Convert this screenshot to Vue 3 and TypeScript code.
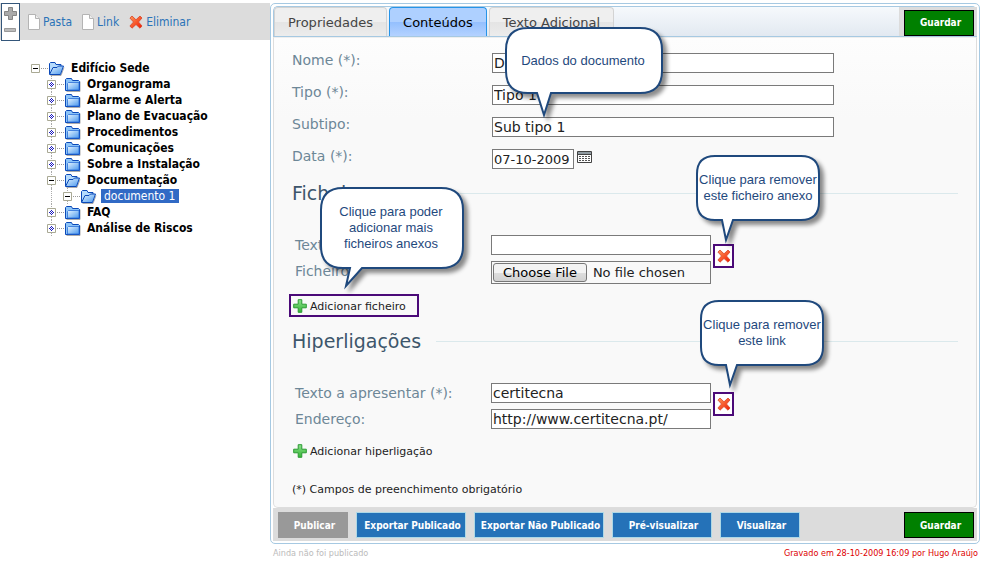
<script setup lang="ts">
import { ref } from 'vue'

interface TreeNode {
  label: string
  level: number
  open: boolean
  selected?: boolean
}

const nodes = ref<TreeNode[]>([
  { label: 'Edifício Sede', level: 0, open: true },
  { label: 'Organograma', level: 1, open: false },
  { label: 'Alarme e Alerta', level: 1, open: false },
  { label: 'Plano de Evacuação', level: 1, open: false },
  { label: 'Procedimentos', level: 1, open: false },
  { label: 'Comunicações', level: 1, open: false },
  { label: 'Sobre a Instalação', level: 1, open: false },
  { label: 'Documentação', level: 1, open: true },
  { label: 'documento 1', level: 2, open: true, selected: true },
  { label: 'FAQ', level: 1, open: false },
  { label: 'Análise de Riscos', level: 1, open: false },
])

const tabs = ['Propriedades', 'Conteúdos', 'Texto Adicional']
const activeTab = ref('Conteúdos')

const actions = [
  { label: 'Exportar Publicado', size: 'large' },
  { label: 'Exportar Não Publicado', size: 'xlarge' },
  { label: 'Pré-visualizar', size: 'medium' },
  { label: 'Visualizar', size: 'small' },
]

const name = ref('Documento 1')
const type = ref('Tipo 1')
const subtype = ref('Sub tipo 1')
const date = ref('07-10-2009')
const fileText = ref('')
const linkText = ref('certitecna')
const linkUrl = ref('http://www.certitecna.pt/')
</script>

<template>
  <svg class="defs" width="0" height="0" aria-hidden="true">
    <defs>
      <linearGradient id="gFolder" x1="0" y1="0" x2="1" y2="1">
        <stop offset="0" stop-color="#e4f4ff" />
        <stop offset="1" stop-color="#4a98ee" />
      </linearGradient>
      <linearGradient id="gRed" x1="0" y1="0" x2="1" y2="1">
        <stop offset="0" stop-color="#ff9a5a" />
        <stop offset="1" stop-color="#f01800" />
      </linearGradient>
      <linearGradient id="gGreen" x1="0" y1="0" x2="0" y2="1">
        <stop offset="0" stop-color="#8be08b" />
        <stop offset="1" stop-color="#35b535" />
      </linearGradient>
      <symbol id="icon-page" viewBox="0 0 12 16">
        <path d="M.5 .5h7l4 4v11H.5z" fill="#fff" stroke="#b4b4b4" />
        <path d="M7.500 .5v4h4" fill="#eee" stroke="#b4b4b4" />
      </symbol>
      <symbol id="icon-cross" viewBox="0 0 14 14">
        <path d="M3 1l4 3.800L11 1l2 2-3.500 4 3.500 4-2 2.200L7 9.500l-4 3.700L.9 11l3.600-4L.9 3z" fill="url(#gRed)" stroke="#d8442a" stroke-width=".8" stroke-linejoin="round" />
      </symbol>
      <symbol id="icon-plus" viewBox="0 0 14 14">
        <path d="M5.200 .7h3.600v4.500h4.500v3.600H8.800v4.500H5.200V8.800H.7V5.200h4.500z" fill="url(#gGreen)" stroke="#2a9a32" stroke-linejoin="round" />
      </symbol>
      <symbol id="icon-closed" viewBox="0 0 17 15">
        <path d="M2.500 14.500h13.500V4.500" fill="none" stroke="#777" stroke-opacity=".6" />
        <path d="M1.500 13.500V2.500l1-1h5l1 2h6l1 1v9z" fill="#8cc4f8" stroke="#0b49b8" />
        <path d="M3.500 13V6.500l1-1h10.500V13z" fill="url(#gFolder)" stroke="#2b6fd8" stroke-width=".8" />
      </symbol>
      <symbol id="icon-open" viewBox="0 0 17 15">
        <path d="M2.500 14.500h10.500l3-8" fill="none" stroke="#777" stroke-opacity=".6" />
        <path d="M1.500 13V2.500l1-1h4.500l1 2h5v2" fill="#b5dbfc" stroke="#0b49b8" />
        <path d="M1.500 13.500L5 6.500h4l1.500-1.500h5L12.500 13.500z" fill="url(#gFolder)" stroke="#0b49b8" stroke-linejoin="round" />
      </symbol>
    </defs>
  </svg>

  <div class="page">
    <aside class="sidebar">
      <div class="toolbar">
        <div class="zoom">
          <button type="button" aria-label="Expandir">
            <svg width="13" height="13" viewBox="0 0 13 13"><path d="M4.500 .5h4v4h4v4h-4v4h-4v-4h-4v-4h4z" fill="#aaa" stroke="#858585" /></svg>
          </button>
          <button type="button" aria-label="Recolher">
            <svg width="13" height="5" viewBox="0 0 13 5"><path d="M.5 .5h11v3H.5z" fill="#bbb" stroke="#999" /></svg>
          </button>
        </div>
        <button type="button" class="tool"><svg width="12" height="16"><use href="#icon-page" /></svg>Pasta</button>
        <button type="button" class="tool"><svg width="12" height="16"><use href="#icon-page" /></svg>Link</button>
        <button type="button" class="tool"><svg width="14" height="14"><use href="#icon-cross" /></svg>Eliminar</button>
      </div>

      <ul class="tree">
        <li v-for="node in nodes" :key="node.label" :class="['node', 'level-' + node.level]">
          <span v-if="node.level === 2" class="guide"></span>
          <svg class="toggle" width="17" height="16" viewBox="0 0 17 16">
            <path v-if="node.level > 0" d="M4.500 0v3M4.500 13v3" stroke="#aaa" stroke-dasharray="1 1" />
            <path d="M10 8.500h7" stroke="#999" stroke-dasharray="1 1" />
            <path d="M.5 4.500h8v8h-8z" fill="#fff" stroke="#a9a994" />
            <path v-if="node.open" d="M2 8.500h5" stroke="#000" />
            <path v-else d="M4 6h1v1H4zM3 7h1v1H3zM5 7h1v1H5zM2 8h1v1H2zM4 8h1v1H4zM6 8h1v1H6zM3 9h1v1H3zM5 9h1v1H5zM4 10h1v1H4z" fill="#1a1ac0" />
          </svg>
          <svg class="folder" width="17" height="15"><use :href="node.open ? '#icon-open' : '#icon-closed'" /></svg>
          <a href="#" :class="{ selected: node.selected }">{{ node.label }}</a>
        </li>
      </ul>
    </aside>

    <main class="main">
      <div class="panel">
        <nav class="tabbar">
          <button v-for="tab in tabs" :key="tab" type="button" :class="['tab', { active: tab === activeTab }]" @click="activeTab = tab">{{ tab }}</button>
          <div class="savebox"><button type="button" class="btn save">Guardar</button></div>
        </nav>

        <form class="body" @submit.prevent>
          <section class="details">
            <label for="name">Nome (*):</label>
            <input id="name" v-model="name" type="text" />
            <label for="type">Tipo (*):</label>
            <input id="type" v-model="type" type="text" />
            <label for="subtype">Subtipo:</label>
            <input id="subtype" v-model="subtype" type="text" />
            <label for="date">Data (*):</label>
            <div class="date">
              <input id="date" v-model="date" type="text" />
              <button type="button" class="plain" aria-label="Calendário">
                <svg width="15" height="12" viewBox="0 0 15 12">
                  <path d="M.5 .5h14v11H.5z" fill="#fff" stroke="#444" />
                  <path d="M1 2h13" stroke="#8f9aa0" stroke-width="2" />
                  <path d="M1 3.500h13" stroke="#444" />
                  <path d="M2 5.500h11M2 7.500h11M2 9.500h11" stroke="#555" stroke-dasharray="2 1" />
                </svg>
              </button>
            </div>
            <div class="callout c-details">
              <svg width="170" height="100" viewBox="0 0 170 100"><path d="M22 1H135Q157 1 157 23V44Q157 66 135 66H46L39 88 32 66H23Q1 66 1 44V23Q1 1 23 1z" /></svg>
              <p>Dados do documento</p>
            </div>
          </section>

          <h2>Ficheiros</h2>
          <section class="group">
            <label for="ftext">Texto:</label>
            <input id="ftext" v-model="fileText" type="text" />
            <label for="file">Ficheiro:</label>
            <input id="file" type="file" />
            <div class="remove">
              <button type="button" aria-label="Remover ficheiro"><svg width="14" height="14"><use href="#icon-cross" /></svg></button>
              <div class="callout c-remove">
                <svg width="140" height="100" viewBox="0 0 140 100"><path d="M19 1H105Q123 1 123 19V47Q123 65 105 65H37L30 85 26 65H19Q1 65 1 47V19Q1 1 19 1z" /></svg>
                <p>Clique para remover este ficheiro anexo</p>
              </div>
            </div>
            <div class="callout c-add">
              <svg width="160" height="112" viewBox="0 0 160 112"><path d="M23 1H121Q143 1 143 23V59Q143 81 121 81H42L26 99 30 81H23Q1 81 1 59V23Q1 1 23 1z" /></svg>
              <p>Clique para poder adicionar mais ficheiros anexos</p>
            </div>
          </section>
          <button type="button" class="add marked"><svg width="14" height="14"><use href="#icon-plus" /></svg>Adicionar ficheiro</button>

          <h2>Hiperligações</h2>
          <section class="group">
            <label for="ltext">Texto a apresentar (*):</label>
            <input id="ltext" v-model="linkText" type="text" />
            <label for="url">Endereço:</label>
            <input id="url" v-model="linkUrl" type="text" />
            <div class="remove">
              <button type="button" aria-label="Remover link"><svg width="14" height="14"><use href="#icon-cross" /></svg></button>
              <div class="callout c-remove c-link">
                <svg width="140" height="100" viewBox="0 0 140 100"><path d="M19 1H105Q123 1 123 19V47Q123 65 105 65H37L30 85 26 65H19Q1 65 1 47V19Q1 1 19 1z" /></svg>
                <p>Clique para remover este link</p>
              </div>
            </div>
          </section>
          <button type="button" class="add"><svg width="14" height="14"><use href="#icon-plus" /></svg>Adicionar hiperligação</button>

          <p class="note">(*) Campos de preenchimento obrigatório</p>
        </form>

        <footer class="actions">
          <button type="button" class="btn" disabled>Publicar</button>
          <button v-for="a in actions" :key="a.label" type="button" :class="['btn', 'blue', a.size]">{{ a.label }}</button>
          <button type="button" class="btn save">Guardar</button>
        </footer>
      </div>
      <div class="status">
        <span>Ainda não foi publicado</span>
        <span class="saved">Gravado em 28-10-2009 16:09 por Hugo Araújo</span>
      </div>
    </main>
  </div>
</template>

<style>
body {
  background: #fff;
}
</style>

<style scoped>
* {
  box-sizing: border-box;
}
.defs {
  position: absolute;
}
.page {
  display: flex;
  align-items: flex-start;
  padding: 3px 6px 0 0;
  font-family: Verdana, 'DejaVu Sans', sans-serif;
  font-size: 13px;
}
button {
  font: inherit;
  cursor: pointer;
}

/* Sidebar */
.sidebar {
  flex: 0 0 270px;
  font-family: Tahoma, 'DejaVu Sans Condensed', 'DejaVu Sans', sans-serif;
}
.toolbar {
  display: flex;
  align-items: center;
  height: 37px;
  padding-left: 1px;
  background: #dcdcdc;
}
.zoom {
  display: flex;
  flex-direction: column;
  align-items: center;
  justify-content: space-between;
  width: 19px;
  height: 38px;
  margin-right: 8px;
  padding: 3px 0 7px;
  border: 1px solid #34567a;
  background: #fff;
}
.zoom button,
.plain {
  display: flex;
  padding: 0;
  border: 0;
  background: none;
}
.tool {
  display: flex;
  align-items: center;
  gap: 3px;
  margin-right: 10px;
  padding: 0;
  border: 0;
  background: none;
  color: #2a73b8;
  font-size: 12px;
}
.tree {
  margin: 0;
  padding: 20px 0 0 31px;
  list-style: none;
}
.node {
  display: flex;
  align-items: center;
  height: 16px;
}
.level-1 {
  padding-left: 16px;
}
.level-2 {
  padding-left: 20px;
}
.guide {
  width: 12px;
  height: 16px;
  border-left: 1px dotted #aaa;
}
.folder {
  margin-right: 4px;
}
.node a {
  padding: 0 2px;
  color: #000;
  font-size: 12px;
  font-weight: bold;
  line-height: 14px;
  text-decoration: none;
  white-space: nowrap;
}
.node .selected {
  padding: 0 4px 0 3px;
  background: #316ac5;
  color: #fff;
  font-weight: normal;
}

/* Panel */
.main {
  flex: 1;
  min-width: 0;
}
.panel {
  padding: 2px;
  border: 1px solid #a6c9e2;
  border-radius: 5px;
}
.tabbar {
  display: flex;
  align-items: stretch;
  gap: 2px;
  height: 31px;
  border: 1px solid #a6c9e2;
  border-right: 0;
  border-radius: 5px 5px 0 0;
  background: linear-gradient(#f6f9fc, #e2e9f1);
}
.tab {
  padding: 0 13px;
  border: 1px solid #d3d3d3;
  border-bottom: 0;
  border-radius: 4px 4px 0 0;
  background: linear-gradient(#efefef 50%, #e4e4e4 50%, #ececec);
  color: #444;
}
.tab.active {
  border-color: #2694e8;
  background: linear-gradient(#aed0ff 50%, #93bffe 50%, #b4d2ff);
  color: #000;
}
.savebox {
  display: flex;
  align-items: center;
  margin-left: auto;
  padding: 2px 3px 0 5px;
  background: #dcdcdc;
}
.btn {
  height: 26px;
  padding: 0 2px 0 5px;
  border: 1px solid #add8e6;
  color: #fff;
  font-family: Tahoma, 'DejaVu Sans Condensed', 'DejaVu Sans', sans-serif;
  font-size: 10px;
  font-weight: bold;
  white-space: nowrap;
}
.blue {
  background: #2572b8;
}
.small {
  min-width: 80px;
}
.medium {
  min-width: 100px;
}
.large {
  min-width: 110px;
}
.xlarge {
  min-width: 130px;
}
.btn:disabled {
  min-width: 70px;
  border-color: #999;
  background: #999;
}
.save {
  width: 70px;
  border-color: #000;
  background: #008000;
}
.body {
  padding: 15px 18px 9px;
  border: 1px solid #ddd;
  border-top-color: #eee;
  border-radius: 0 0 5px 5px;
  background: linear-gradient(#fdfdfd, #f9f9f9 80px);
  color: #222;
}
label {
  color: #6d8797;
  font-size: 14px;
  line-height: 14px;
}
input {
  width: 100%;
  height: 20px;
  padding: 0 1px;
  border: 1px solid #7a7a7a;
  border-radius: 0;
  background: #fff;
  color: #222;
  font: inherit;
  font-size: 14px;
}
.details {
  position: relative;
  display: grid;
  grid-template-columns: 200px minmax(0, 342px);
  row-gap: 12px;
}
.date {
  display: flex;
  align-items: center;
  gap: 3px;
}
.date input {
  width: 82px;
  font-size: 13px;
}
.date button {
  margin-bottom: 4px;
}
h2 {
  display: flex;
  align-items: center;
  gap: 15px;
  margin: 12px 0 30px;
  color: #3d566b;
  font-size: 19px;
  font-weight: normal;
  line-height: 24px;
}
h2::after {
  content: '';
  flex: 1;
  height: 1px;
  background: #dbe9ec;
}
.group {
  position: relative;
  display: grid;
  grid-template-columns: 196px minmax(0, 220px) 23px;
  row-gap: 6px;
  padding-left: 3px;
}
.group label {
  padding-top: 3px;
}
input[type='file'] {
  height: 23px;
  padding: 1px;
  background: #f9f9f9;
  font-size: 13px;
  line-height: 19px;
}
input::file-selector-button {
  height: 19px;
  margin: 0 6px 0 0;
  padding: 0 9px;
  border: 1px solid #777;
  border-radius: 3px;
  background: linear-gradient(#f3f3f3 50%, #dedede 50%, #d2d2d2);
  color: #000;
  font: inherit;
  line-height: 17px;
}
.remove {
  position: relative;
  grid-column: 3;
  grid-row: 1 / 3;
  padding: 9px 0 0 2px;
}
.remove button {
  display: flex;
  align-items: center;
  justify-content: center;
  width: 21px;
  height: 24px;
  padding: 0;
  border: 2px solid #4b0a78;
  background: #fff;
}
.group + .add {
  margin: 10px 0 0 -3px;
}
.add {
  display: flex;
  align-items: center;
  gap: 3px;
  min-width: 130px;
  height: 23px;
  padding: 1px 8px 0 2px;
  border: 2px solid transparent;
  background: none;
  color: #222;
  font-family: Tahoma, 'DejaVu Sans', sans-serif;
  font-size: 11px;
}
.marked {
  border-color: #4b0a78;
}
.note {
  margin: 20px 0 0;
  font-size: 11px;
  line-height: 16px;
}

/* Callouts lie over the form */
.callout {
  position: absolute;
  z-index: 2;
  pointer-events: none;
}
.callout svg {
  display: block;
  overflow: visible;
  fill: #fff;
  stroke: #1f497d;
  stroke-width: 2;
  filter: drop-shadow(4px 4px 2px rgba(0, 0, 0, 0.45));
}
.callout p {
  position: absolute;
  top: 0;
  left: 0;
  display: flex;
  align-items: center;
  justify-content: center;
  margin: 0;
  color: #1f497d;
  font-family: 'Liberation Sans', Arial, sans-serif;
  font-size: 13px;
  line-height: 16px;
  text-align: center;
}
.c-details {
  top: -26px;
  left: 213px;
}
.c-details p {
  width: 156px;
  height: 67px;
}
.c-add {
  top: -48px;
  left: 28px;
}
.c-add p {
  width: 142px;
  height: 82px;
  padding: 0 16px;
}
.c-remove {
  top: -80px;
  left: -15px;
}
.c-link {
  top: -83px;
  left: -11px;
}
.c-remove p {
  width: 124px;
  height: 66px;
}

.actions {
  display: flex;
  gap: 8px;
  padding: 4px 3px 3px 5px;
  background: #dcdcdc;
}
.actions .save {
  margin-left: auto;
}
.status {
  display: flex;
  justify-content: space-between;
  padding: 2px 2px 0 3px;
  color: #bbb;
  font-family: Tahoma, 'DejaVu Sans Condensed', 'DejaVu Sans', sans-serif;
  font-size: 9px;
  line-height: 14px;
}
.saved {
  color: #d00;
}
</style>
